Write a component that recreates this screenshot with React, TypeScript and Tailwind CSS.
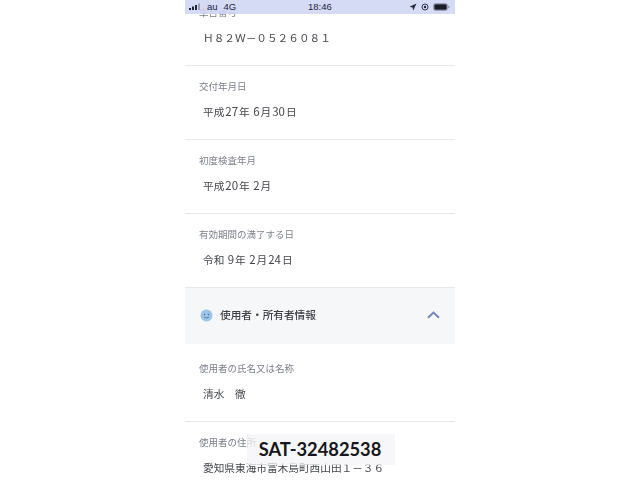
const jp = "font-['Noto_Sans_CJK_JP','Noto_Sans',sans-serif]";

const rows = [
  { label: "車台番号", value: "Ｈ８２Ｗ－０５２６０８１" },
  { label: "交付年月日", value: "平成27年 6月30日" },
  { label: "初度検査年月", value: "平成20年 2月" },
  { label: "有効期間の満了する日", value: "令和 9年 2月24日" },
];

// half width digits sit a bit larger and looser than the kanji around them
const Value = ({ text }: { text: string }) => (
  <>
    {text.split(/(\d+)/).map((part, i) =>
      /^\d+$/.test(part) ? (
        <span key={i} className="text-[11.5px] leading-[10px] mx-[1px]">
          {part}
        </span>
      ) : (
        <span key={i}>{part}</span>
      ),
    )}
  </>
);

const Row = ({
  label,
  value,
  line = true,
  top = "pt-[14px]",
  height = "h-[74px]",
}: {
  label: string;
  value: string;
  line?: boolean;
  top?: string;
  height?: string;
}) => (
  <div className={`${top} ${height} ${line ? "border-b border-[#e8e8ea]" : ""} pl-[14px]`}>
    <div className="text-[9.5px] leading-[12px] text-[#7c7f8c]">{label}</div>
    <div className="mt-[13px] ml-[4px] h-[14px] text-[10.67px] leading-[14px] text-[#45474d] whitespace-pre">
      <Value text={value} />
    </div>
  </div>
);

const StatusBar = () => (
  <div className="absolute top-0 left-0 right-0 h-[14px] bg-[#d0d6f4]/90 flex items-center justify-between pl-[4px] pr-[5px] text-[9.5px] text-[#23253a] font-['Liberation_Sans',sans-serif]">
    <div className="flex items-center">
      <svg width="12" height="8" viewBox="0 0 12 8" className="fill-[#23253a]">
        <rect x="0" y="5" width="2" height="2" />
        <rect x="3" y="3.5" width="2" height="3.5" />
        <rect x="6" y="2" width="2" height="5" />
        <rect x="9" y="0.5" width="2" height="6.5" className="fill-[#9a9fb8]" />
      </svg>
      <span className="ml-[6px]">au</span>
      <span className="ml-[6px]">4G</span>
    </div>
    <span className="absolute left-[123px] font-medium">18:46</span>
    <div className="flex items-center gap-[4px]">
      <svg width="8" height="8" viewBox="0 0 8 8" className="fill-[#23253a]">
        <path d="M7.5 0.5 L0.5 3.8 L3.6 4.4 L4.2 7.5 Z" />
      </svg>
      <svg width="8" height="8" viewBox="0 0 8 8" fill="none" className="stroke-[#23253a]">
        <circle cx="4" cy="4" r="3" strokeWidth="0.9" />
        <circle cx="4" cy="4" r="1.2" className="fill-[#23253a]" strokeWidth="0" />
      </svg>
      <svg width="17" height="8" viewBox="0 0 17 8" fill="none">
        <rect x="0.5" y="0.5" width="14" height="7" rx="2" className="stroke-[#8a8ea6]" strokeWidth="0.8" />
        <rect x="1.3" y="1.3" width="12.4" height="5.4" rx="1.2" className="fill-[#1b1c28]" />
        <rect x="15.2" y="2.8" width="1.2" height="2.4" className="fill-[#8a8ea6]" />
      </svg>
    </div>
  </div>
);

export default function App() {
  return (
    <div className={`h-[480px] w-[640px] overflow-hidden bg-white flex justify-center ${jp}`}>
      <div className="relative w-[270px] h-[480px] overflow-hidden bg-white">
        <div className="-mt-[8px] blur-[0.3px]">
          {rows.map((r, i) => (
            <Row key={i} label={r.label} value={r.value} />
          ))}
          <div className="h-[56px] pb-[2px] bg-[#f6f7f9] flex items-center justify-between pl-[15px] pr-[15px]">
            <div className="flex items-center">
              <svg width="13" height="13" viewBox="0 0 13 13">
                <circle cx="6.5" cy="6.5" r="6" className="fill-[#9cc4e8]" />
                <circle cx="4.5" cy="5.5" r="0.7" className="fill-[#4a6f96]" />
                <circle cx="8.5" cy="5.5" r="0.7" className="fill-[#4a6f96]" />
                <path d="M4 8 Q6.5 10 9 8" fill="none" className="stroke-[#4a6f96]" strokeWidth="0.8" />
              </svg>
              <span className="ml-[7px] text-[10.67px] font-medium text-[#3d3f46]">使用者・所有者情報</span>
            </div>
            <svg width="13" height="8" viewBox="0 0 13 8" fill="none" className="stroke-[#6f86bb]">
              <path d="M1 6.8 L6.5 1.6 L12 6.8" strokeWidth="2" />
            </svg>
          </div>
          <Row label="使用者の氏名又は名称" value="清水　徹" top="pt-[18px]" height="h-[78px]" />
          <Row label="使用者の住所" value="愛知県東海市富木島町西山田１－３６" line={false} />
        </div>
        <StatusBar />
        <div className="absolute left-[62px] top-[434px] w-[148px] h-[31px] pr-[2px] bg-[#f4f4f7]/75 flex items-center justify-center text-[18.3px] font-bold text-[#17171c] font-['Lato',sans-serif]">
          SAT-32482538
        </div>
      </div>
    </div>
  );
}
